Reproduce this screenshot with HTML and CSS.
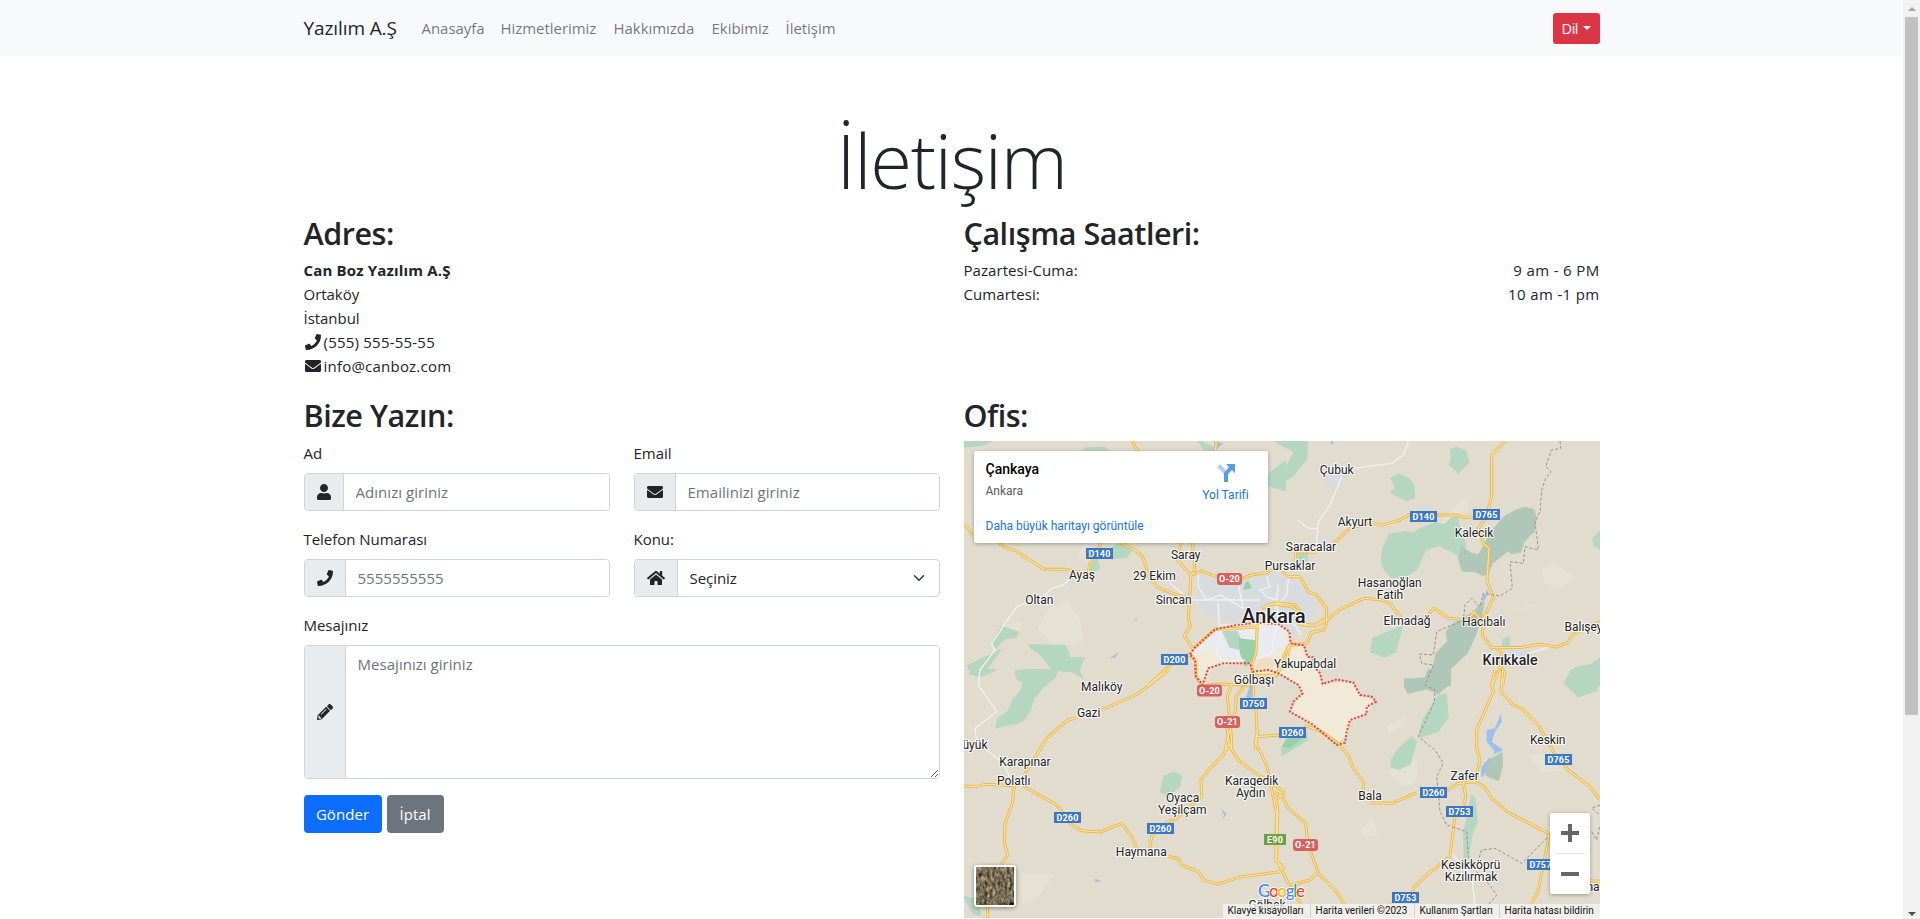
FILE: index.html
```html
<!DOCTYPE html>
<html lang="tr">
<head>
<meta charset="utf-8">
<title>İletişim</title>
<link rel="stylesheet" href="styles.css">
</head>
<body>
<svg class="sprite" aria-hidden="true">
  <symbol id="i-phone" viewBox="0 0 512 512"><path d="M493.4 24.6l-104-24c-11.3-2.6-22.9 3.3-27.5 13.9l-48 112c-4.2 9.8-1.4 21.3 6.9 28l60.6 49.6c-36 76.7-98.9 140.5-177.2 177.2l-49.6-60.6c-6.8-8.3-18.2-11.1-28-6.9l-112 48C3.9 366.5-2 378.1.6 389.4l24 104C27.1 504.2 36.7 512 48 512c256.1 0 464-207.5 464-464 0-11.2-7.7-20.9-18.6-23.4z"/></symbol>
  <symbol id="i-mail" viewBox="0 0 512 512"><path d="M502.3 190.8c3.9-3.1 9.7-.2 9.7 4.7V400c0 26.5-21.5 48-48 48H48c-26.5 0-48-21.5-48-48V195.6c0-5 5.7-7.8 9.7-4.7 22.4 17.4 52.1 39.5 154.1 113.6 21.1 15.4 56.7 47.8 92.2 47.6 35.7.3 72-32.8 92.3-47.6 102-74.1 131.6-96.3 154-113.7zM256 320c23.2.4 56.6-29.2 73.4-41.4 132.7-96.3 142.8-104.7 173.4-128.7 5.8-4.5 9.2-11.5 9.2-18.9v-19c0-26.5-21.5-48-48-48H48c-26.5 0-48 21.5-48 48v19c0 7.4 3.4 14.3 9.2 18.9 30.6 23.9 40.7 32.4 173.4 128.7 16.8 12.2 50.2 41.8 73.4 41.4z"/></symbol>
  <symbol id="i-user" viewBox="0 0 448 512"><path d="M224 256c70.7 0 128-57.3 128-128S294.7 0 224 0 96 57.3 96 128s57.3 128 128 128zm89.6 32h-16.7c-22.2 10.2-46.9 16-72.9 16s-50.6-5.8-72.9-16h-16.7C60.2 288 0 348.2 0 422.4V464c0 26.5 21.5 48 48 48h352c26.5 0 48-21.5 48-48v-41.6c0-74.2-60.2-134.4-134.4-134.4z"/></symbol>
  <symbol id="i-home" viewBox="0 0 576 512"><path d="M280.37 148.26L96 300.11V464a16 16 0 0 0 16 16l112.06-.29a16 16 0 0 0 15.92-16V368a16 16 0 0 1 16-16h64a16 16 0 0 1 16 16v95.64a16 16 0 0 0 16 16.05L464 480a16 16 0 0 0 16-16V300L295.67 148.26a12.19 12.19 0 0 0-15.3 0zM571.6 251.47L488 182.56V44.05a12 12 0 0 0-12-12h-56a12 12 0 0 0-12 12v72.61L318.47 43a48 48 0 0 0-61 0L4.34 251.47a12 12 0 0 0-1.6 16.9l25.5 31A12 12 0 0 0 45.15 301l235.22-193.74a12.19 12.19 0 0 1 15.3 0L530.9 301a12 12 0 0 0 16.9-1.6l25.5-31a12 12 0 0 0-1.7-16.93z"/></symbol>
  <symbol id="i-pencil" viewBox="0 0 512 512"><path d="M497.9 142.1l-46.1 46.1c-4.7 4.7-12.3 4.7-17 0l-111-111c-4.7-4.7-4.7-12.3 0-17l46.1-46.1c18.7-18.7 49.1-18.7 67.9 0l60.1 60.1c18.8 18.7 18.8 49.1 0 67.9zM284.2 99.8L21.6 362.4.4 483.9c-2.9 16.4 11.4 30.6 27.8 27.8l121.5-21.3 262.6-262.6c4.7-4.7 4.7-12.3 0-17l-111-111c-4.8-4.7-12.4-4.7-17.1 0zM124.1 339.9c-5.5-5.5-5.5-14.3 0-19.8l154-154c5.5-5.5 14.3-5.5 19.8 0s5.5 14.3 0 19.8l-154 154c-5.5 5.5-14.3 5.5-19.8 0zM88 424h48v36.3l-64.5 11.3-31.1-31.1L51.7 376H88v48z"/></symbol>
</svg>

<div class="page">
  <nav class="navbar">
    <div class="container bar">
      <span class="brand">Yazılım A.Ş</span>
      <div class="links"><a class="l1">Anasayfa</a><a class="l2">Hizmetlerimiz</a><a class="l3">Hakkımızda</a><a class="l4">Ekibimiz</a><a class="l5">İletişim</a></div>
      <button class="lang">Dil<i class="caret"></i></button>
    </div>
  </nav>

  <main class="container">
    <h1 class="title">İletişim</h1>
    <div class="grid">
      <section class="address">
        <h2>Adres:</h2>
        <p class="strong">Can Boz Yazılım A.Ş</p>
        <p>Ortaköy</p>
        <p>İstanbul</p>
        <p class="contact"><svg class="ico"><use href="#i-phone"/></svg><span>(555) 555-55-55</span></p>
        <p class="contact"><svg class="ico"><use href="#i-mail"/></svg><span>info@canboz.com</span></p>
      </section>
      <section class="hours">
        <h2>Çalışma Saatleri:</h2>
        <p class="row"><span>Pazartesi-Cuma:</span><span class="time">9 am - 6 PM</span></p>
        <p class="row"><span>Cumartesi:</span><span class="time">10 am -1 pm</span></p>
      </section>
      <section>
        <h2>Bize Yazın:</h2>
        <form class="form">
          <div class="field"><label>Ad</label><div class="group"><span class="pre"><svg class="ico user"><use href="#i-user"/></svg></span><input placeholder="Adınızı giriniz"></div></div>
          <div class="field"><label>Email</label><div class="group"><span class="pre"><svg class="ico"><use href="#i-mail"/></svg></span><input placeholder="Emailinizi giriniz"></div></div>
          <div class="field"><label>Telefon Numarası</label><div class="group"><span class="pre"><svg class="ico"><use href="#i-phone"/></svg></span><input placeholder="5555555555"></div></div>
          <div class="field"><label>Konu:</label><div class="group"><span class="pre"><svg class="ico home"><use href="#i-home"/></svg></span><div class="select"><span>Seçiniz</span><svg class="chev" viewBox="0 0 16 16"><path d="M2 5l6 6 6-6"/></svg></div></div></div>
          <div class="field wide"><label>Mesajınız</label><div class="group"><span class="pre"><svg class="ico"><use href="#i-pencil"/></svg></span><textarea placeholder="Mesajınızı giriniz"></textarea></div></div>
          <div class="actions wide"><button type="button" class="btn send">Gönder</button><button type="button" class="btn cancel">İptal</button></div>
        </form>
      </section>
      <section>
        <h2>Ofis:</h2>
        <div class="map">
          <svg class="canvas" viewBox="964 441 636 477">
            <defs>
              <g id="roads">
                <g transform="translate(955 435) scale(.33333)">
                  <path d="M530 0Q530 30 552 50M780 10Q790 40 770 60"/>
                  <path d="M27 270L40 280 52 303M130 322L150 338 183 348 266 402 330 403 375 412M440 322L425 350 405 385 398 420"/>
                  <path d="M495 322L540 345 563 365 582 425 608 457 660 478 702 488"/>
                  <path d="M680 320L664 372 708 420 700 550 706 575 688 602 712 640"/>
                  <path d="M712 322L720 405 708 420M708 420L740 408 790 427M858 432L890 420 935 413 975 392"/>
                  <path d="M706 655L645 692 580 750M920 520L950 507 990 507"/>
                </g>
                <g transform="translate(1275 435) scale(.33333)">
                  <path d="M692 18L650 60 650 185 632 250 610 280 625 325 642 340 636 435 655 490 645 510 628 545 622 600 650 638 740 637 795 628 845 636 880 622 890 600 975 560"/>
                  <path d="M290 262L320 271 350 262 375 255 400 240 440 240M485 240L545 240 565 248 600 245M290 262L225 280 175 325M125 352L60 350 65 395"/>
                  <path d="M20 410L40 425 75 425 100 470 125 480 155 520 155 565 145 585 110 592 95 625 45 630M0 507L50 515 70 530M85 568L120 573 155 555 200 520 268 490 320 495 345 505 380 550M440 560L477 520 520 550 580 555 597 530 622 560"/>
                  <path d="M665 640L680 655 678 690 652 750M675 695L690 712 683 750M45 630L30 690 0 720"/>
                </g>
                <g transform="translate(1170 560) scale(.33333)">
                  <path d="M60 285L75 300 78 350 98 377 150 372 240 375M75 262L135 208 200 205 265 200M262 190L258 280 245 315 248 345 320 347 340 290 358 255 385 255M184 375L172 410 184 530 184 570M222 378L198 410 196 450 175 530 165 570M250 375L250 410M258 448L262 530 330 525M262 530L255 570M60 285L45 293M285 140L320 128 375 135 400 165M385 190L400 195 440 195 465 175"/>
                </g>
                <g transform="translate(955 670) scale(.33333)">
                  <path d="M640 0L548 72 440 120M367 142L335 152 275 205 208 315M27 348L65 350 90 343 178 347 172 400 150 460 148 515 158 555 138 585M98 705L98 744M205 348L265 383 305 405 350 465 380 482 435 486 500 460 530 500 548 540M583 540L590 500 630 460 665 445 740 378 738 330 765 295 805 255 822 220M815 170L825 230 850 270 895 305 960 345 990 370M910 180L900 215 935 285 948 350 965 430 962 570 990 600M962 385L990 375M640 558L670 567 680 585 730 605 748 632 790 642 850 622 975 605"/>
                </g>
                <g transform="translate(1275 670) scale(.33333)">
                  <path d="M0 368L20 378 40 415 92 460 98 520 130 610 180 660 210 705 M0 385L8 410 5 570 40 640 100 744M50 645L105 630 122 612M75 185L95 168 140 185 190 220 222 260 235 295 265 335 265 370M285 398L350 400 425 368M515 362L550 340 600 335 628 350 650 385 700 428 820 490 820 510 790 660 765 710M660 0L650 45 655 65 605 180 605 230 615 275 605 310M683 0L678 65 715 105 740 115 790 165 815 210 835 245 880 300 945 350 975 390M565 340L572 380 565 408M540 440L525 560 455 615 415 655 412 670M350 700L330 715M945 632L975 634"/>
                </g>
              </g>
            </defs>
            <rect class="land" x="964" y="441" width="636" height="477"/>
            <g transform="translate(955 435) scale(.33333)">
              <path class="hill" d="M390 325L430 345 400 385 365 360zM150 570L200 560 190 600 150 610zM280 520L340 500 380 560 385 620 300 640 250 580zM900 670L980 690 960 720 890 700z"/>
              <path class="green" d="M27 18H110L80 30 27 35zM390 40L450 38 465 55 380 55zM730 18L780 40 760 55zM990 80L945 115 938 150 990 165zM465 345L490 328 528 345 515 365 475 370zM405 395L425 372 432 400 400 418zM140 575L190 592 185 605 150 610 120 638 110 625zM38 693L118 655 135 645 85 715 50 712zM222 630L330 632 345 670 385 670 370 710 295 705 255 655 230 640z"/>
              <path class="urban" d="M730 410L790 440 860 445 905 415 990 420 990 510 940 505 900 540 830 560 760 545 725 500zM610 470L700 470 700 505 620 500zM325 440L370 435 340 455z"/>
              <path class="water" d="M780 18L805 25 775 50zM545 545L538 555 545 558zM465 668L492 652 480 668z"/>
            </g>
            <g transform="translate(1275 435) scale(.33333)">
              <path class="hill" d="M490 265L575 180 580 220 500 290zM802 400L840 388 902 425 855 460 805 445zM710 530L800 500 760 520z"/>
              <path class="green" d="M0 18H95L95 70 50 125 0 150 0 120 35 95 60 50zM528 45L545 37 572 50 580 82 550 112 525 90 530 70zM348 130L370 118 400 132 415 150 418 188 395 195 348 172 365 162zM320 375L325 340 345 298 390 292 415 295 440 280 480 265 510 270 530 250 547 248 553 280 570 330 560 367 525 345 490 330 450 345 425 400 395 422 350 427 330 405zM295 610L380 575 360 650 330 665 288 650zM70 360L98 355 95 380 75 380zM975 290L955 310 958 330 975 340zM685 615L700 607 705 640 685 638zM870 738L900 700 950 690 975 670 975 750H875z"/>
              <path class="forest" d="M552 372L562 337 585 355 610 362 630 330 645 295 690 245 720 228 750 218 775 225 782 250 775 290 745 320 735 350 710 355 700 345 650 385 640 410 625 420 600 408 563 407zM543 560L595 535 625 500 620 540 600 600 575 655 525 700 525 750H455L475 700 485 655 520 620 515 590zM390 735L450 730 480 750H390z"/>
              <path class="urban" d="M150 125L180 80 225 105 190 150 150 165zM115 325L160 300 160 340zM0 420L60 435 120 500 120 560 70 560 50 620 0 620zM500 545L550 555 530 570zM670 645L760 645 760 700 700 690z"/>
              <path class="water" d="M167 18H174V30L167 25zM636 460L640 475 625 500 622 480 633 478z"/>
            </g>
            <g transform="translate(955 670) scale(.33333)">
              <path class="hill" d="M200 610L295 615 250 680 200 700z"/>
              <path class="green" d="M85 0H120L75 20 45 10zM182 5L215 0H305L300 20 265 50 235 85 225 120 210 145 185 160 150 165 125 173 130 145 160 125 175 90 200 60 205 35 185 25zM368 0L383 22 345 0zM628 320L655 308 678 318 673 350 640 376 618 365zM27 680L65 690 75 735 55 730zM980 240L990 230V250z"/>
              <path class="water" d="M875 85L888 45 895 40 888 85zM798 415L815 433 800 450 808 435zM420 627L443 634 420 636z"/>
            </g>
            <g transform="translate(1275 670) scale(.33333)">
              <path class="hill" d="M335 170L395 135 380 170 340 190zM340 310L400 250 430 280 420 340 380 350zM255 480L290 445 310 490 270 505zM760 255L820 250 860 300 800 310z"/>
              <path class="green" d="M22 235L45 195 95 192 95 210 22 255zM432 198L445 150 490 78 513 73 518 140 490 182 440 200zM350 270L370 240 410 202 423 215 405 280 370 297 350 290zM567 488L580 440 590 378 598 385 606 455 590 490 578 565H569zM870 40L890 0H965V60L910 80z"/>
              <path class="forest" d="M390 50L390 28 450 30 460 0H515L523 40 490 70 455 55 400 68zM630 280L680 250 680 290 670 330 635 315z"/>
              <path class="water" d="M635 180L660 175 678 130 680 155 660 185 650 215 685 240 650 255 625 320 618 320 620 290 660 245 635 215z"/>
            </g>
            <g transform="translate(1170 560) scale(.33333)">
              <path class="area" d="M60 283L135 208 262 188 330 195 358 220 362 250 402 255 412 290 450 340 458 372 545 365 570 405 618 422 590 462 540 480 530 525 500 552 430 500 360 455 395 400 385 375 325 345 248 345 240 310 205 310 125 325 98 375 78 350z"/>
              <path class="city" d="M70 275L135 210 262 200 330 200 350 250 310 280 270 300 150 300 130 265z"/>
              <path class="cream" d="M262 300L300 290 320 310 300 335 255 330z"/>
              <path class="green" d="M160 215L200 215 225 270 180 260z"/><path class="park" d="M205 235L255 240 258 295 225 320 210 280zM235 62L245 85 220 90 225 70zM335 560L350 535 400 533 360 565z"/>
              <path class="water" d="M228 412L240 375 250 378 246 412z"/>
              <path class="minor" d="M0 70L60 120 110 120 150 105 220 145M85 30L85 80 110 120M205 75L220 145M145 130L148 240 140 285 160 305 225 300M290 50L300 80 270 90 290 110 320 120 325 180 310 240 305 280 265 295M325 75L320 120M370 190L395 225M150 195H240M110 120H270"/>
            </g>
            <g class="minor" transform="translate(955 435) scale(.33333)"><path d="M340 435L325 450 290 460 260 490 215 505 185 515 110 625 120 645 75 705 70 750 125 830 60 880 65 920 150 990 170 1045"/></g>
            <g class="minor" transform="translate(1275 435) scale(.33333)"><path d="M400 20L385 60 350 85 270 95 205 105M200 125L165 210 130 260 122 350M130 280L100 280 68 255M760 655L840 630M528 1255L590 1320 602 1430M40 430L35 480 0 520"/></g>
            <use href="#roads" class="edge"/>
            <use href="#roads" class="core"/>
            <g class="border" transform="translate(1275 435) scale(.33333)"><path d="M855 18L857 40 830 45 812 95 828 110 812 130 800 165 795 230 780 260 790 345 750 335 745 385 705 380 712 460 675 483 625 475 615 515 590 490 570 510 565 555 485 590 475 660 433 657 440 685 475 690 450 750 480 765 478 800 430 905 480 945 505 985 485 1025 495 1130 515 1170 575 1190 580 1265 605 1290 620 1245 660 1240 740 1285 780 1245 820 1205M975 1110L950 1120 975 1140M950 1190L965 1215 975 1170M605 1310L640 1345 665 1380 640 1410"/></g>
            <path class="limit" transform="translate(1170 560) scale(.33333)" d="M60 283L75 262 135 208 200 195 262 188 325 192 358 215 362 250 402 256 412 290 430 292 432 320 450 340 458 372 500 358 550 368 570 405 605 410 618 425 590 440 590 462 540 480 530 515 525 548 500 555 430 495 360 455 370 425 398 400 385 375 325 340 295 330 248 335 240 310 200 310 160 310 115 325 98 375 78 350 75 300z"/>

            <g class="place">
              <text x="1039.3" y="604">Oltan</text><text x="1082" y="579">Ayaş</text><text x="1154.3" y="580">29 Ekim</text><text x="1185.7" y="559">Saray</text><text x="1173.7" y="604">Sincan</text>
              <text x="1336.7" y="474">Çubuk</text><text x="1355" y="526">Akyurt</text><text x="1311" y="551">Saracalar</text><text x="1290" y="570">Pursaklar</text><text x="1474" y="537">Kalecik</text><text x="1389.7" y="587">Hasanoğlan</text><text x="1390" y="599">Fatih</text><text x="1407" y="625">Elmadağ</text><text x="1483.7" y="626">Hacıbalı</text><text x="1583.5" y="631">Balışey</text><text x="1305" y="668">Yakupabdal</text><text x="1254" y="684">Gölbaşı</text>
              <text x="1101.7" y="691">Malıköy</text><text x="1088.7" y="717">Gazi</text><text x="975" y="749">üyük</text><text x="1025" y="766">Karapınar</text><text x="1013.7" y="785">Polatlı</text><text x="1182.7" y="802">Oyaca</text><text x="1182.3" y="814">Yeşilçam</text><text x="1251.7" y="785">Karagedik</text><text x="1250.7" y="797">Aydın</text><text x="1141.3" y="856">Haymana</text><text x="1267" y="909">Gölbek</text>
              <text x="1547.7" y="744">Keskin</text><text x="1464.7" y="780">Zafer</text><text x="1370" y="800">Bala</text><text x="1470.7" y="869">Kesikköprü</text><text x="1471" y="881">Kızılırmak</text><text x="1593" y="891">na</text>
              <text class="town" x="1510" y="665">Kırıkkale</text><text class="capital" x="1273.7" y="623">Ankara</text>
            </g>
            <g class="shield">
              <g transform="translate(1086 548)"><rect/><text x="13.5" y="9">D140</text></g>
              <g transform="translate(1161 654)"><rect/><text x="13.5" y="9">D200</text></g>
              <g transform="translate(1410 511)"><rect/><text x="13.5" y="9">D140</text></g>
              <g transform="translate(1473 509)"><rect/><text x="13.5" y="9">D765</text></g>
              <g transform="translate(1240 698)"><rect/><text x="13.5" y="9">D750</text></g>
              <g transform="translate(1279 727)"><rect/><text x="13.5" y="9">D260</text></g>
              <g transform="translate(1054 812)"><rect/><text x="13.5" y="9">D260</text></g>
              <g transform="translate(1147 823)"><rect/><text x="13.5" y="9">D260</text></g>
              <g transform="translate(1420 787)"><rect/><text x="13.5" y="9">D260</text></g>
              <g transform="translate(1446 806)"><rect/><text x="13.5" y="9">D753</text></g>
              <g transform="translate(1392 892)"><rect/><text x="13.5" y="9">D753</text></g>
              <g transform="translate(1545 754)"><rect/><text x="13.5" y="9">D765</text></g>
              <g transform="translate(1527 859)"><rect/><text x="13.5" y="9">D757</text></g>
              <g class="euro" transform="translate(1264 834)"><rect/><text x="11" y="9">E90</text></g>
              <g class="toll" transform="translate(1217 573)"><rect/><text x="12.5" y="9">O-20</text></g>
              <g class="toll" transform="translate(1197 684.5)"><rect/><text x="12.5" y="9">O-20</text></g>
              <g class="toll" transform="translate(1215 716)"><rect/><text x="12.5" y="9">O-21</text></g>
              <g class="toll" transform="translate(1293 839)"><rect/><text x="12.5" y="9">O-21</text></g>
            </g>
            <text class="logo" x="1258" y="897" textLength="47"><tspan fill="#4285f4">G</tspan><tspan fill="#ea4335">o</tspan><tspan fill="#fbbc04">o</tspan><tspan fill="#4285f4">g</tspan><tspan fill="#34a853">l</tspan><tspan fill="#ea4335">e</tspan></text>
          </svg>
          <div class="card">
            <div class="info"><b>Çankaya</b><span>Ankara</span><a>Daha büyük haritayı görüntüle</a></div>
            <div class="route"><svg viewBox="0 0 18 18"><path fill="#b3cff8" d="M0 3L3 0 9 6.5V12L7 10z"/><path fill="#5a9be8" d="M9 0h9v9l-3-3-4 4v8H7v-9l5-6z"/></svg><a>Yol Tarifi</a></div>
          </div>
          <div class="zoom"><span class="plus"></span><hr><span class="minus"></span></div>
          <svg class="thumb" viewBox="0 0 38 38"><filter id="soil"><feTurbulence type="fractalNoise" baseFrequency=".35 .2" numOctaves="4" seed="5"/><feColorMatrix values=".7 .4 0 0 -.08  .6 .42 0 0 -.09  .5 .4 0 0 -.12  0 0 0 0 1"/></filter><g filter="url(#soil)" class="soil"><rect width="38" height="38"/></g><path d="M33 38L34 35 38 36V38z" fill="#111"/></svg>
          <div class="credits"><span class="c1">Klavye kısayolları</span><span class="c2">Harita verileri ©2023</span><span class="c3">Kullanım Şartları</span><span class="c4">Harita hatası bildirin</span></div>
        </div>
      </section>
    </div>
  </main>
</div>
<aside class="scroll"><i class="up"></i><div class="thumbbar"></div><i class="down"></i></aside>
</body>
</html>
```
FILE: styles.css
```css
* { box-sizing: border-box; }
body { margin: 0; display: flex; height: 919px; overflow: hidden; background: #fff; color: #212529; font: 15px/24px "Open Sans", "Noto Sans", sans-serif; letter-spacing: -.04px; }
p, h1, h2 { margin: 0; }
.sprite { position: absolute; width: 0; height: 0; }
.page { flex: 1; }
.container { width: 1296px; margin: 0 auto; }
.navbar { height: 56px; background: #f8f9fa; }
.bar { display: flex; align-items: center; height: 56px; }
.brand { width: 94px; margin-right: 24px; font-size: 19px; letter-spacing: -.1px; white-space: nowrap; }
.links { display: flex; gap: 16px; flex: 1; color: rgba(0,0,0,.55); white-space: nowrap; }
.l1 { width: 63px; } .l2 { width: 97px; } .l3 { width: 82px; } .l4 { width: 58px; }
.lang { display: flex; align-items: center; justify-content: center; width: 47px; height: 31px; padding: 2px 0 0 1px; border: 0; border-radius: 3px; background: #dc3545; color: #fff; font: 14px "Liberation Sans", sans-serif; }
.caret { margin: -3px 0 0 5px; border: 4px solid transparent; border-top-color: #fff; border-bottom: 0; }

.title { padding-top: 56px; height: 157px; text-align: center; font-size: 76px; line-height: 96px; font-weight: 300; letter-spacing: -1.3px; }
.grid { display: grid; grid-template-columns: 636px 636px; gap: 0 24px; }
.address, .hours { height: 182px; }
h2 { padding-top: 1px; margin-bottom: 7px; font-size: 30.5px; line-height: 38.4px; font-weight: 600; letter-spacing: -.45px; }
.address p, .hours p { position: relative; top: -1px; }
.strong { font-weight: 700; letter-spacing: .17px; }
.contact { display: flex; align-items: center; gap: 3px; padding-left: 1px; letter-spacing: .22px; }
.ico { width: 16px; height: 16px; fill: #212529; flex: none; }
.user { width: 14px; } .home { width: 18px; }
.row { display: flex; justify-content: space-between; }
.row { letter-spacing: .07px; }
.time { letter-spacing: .35px; }

.form { display: grid; grid-template-columns: 306px 306px; gap: 16px 24px; }
.wide { grid-column: 1 / 3; }
label { display: block; margin-bottom: 8px; }
.group { display: flex; min-height: 38px; border: 1px solid #ced4da; border-radius: 4px; overflow: hidden; }
.pre { display: flex; align-items: center; padding: 0 12px; background: #e9ecef; border-right: 1px solid #ced4da; }
input, textarea { flex: 1; min-width: 0; border: 0; margin: 0; padding: 6px 12px; font: inherit; letter-spacing: .04px; background: #fff; }
textarea { height: 132px; }
::placeholder { color: #6c757d; opacity: 1; }
.select { flex: 1; display: flex; align-items: center; justify-content: space-between; padding: 0 12px; }
.chev { width: 16px; height: 12px; fill: none; stroke: #343a40; stroke-width: 2; stroke-linecap: round; stroke-linejoin: round; }
.actions { display: flex; gap: 5px; }
.btn { height: 38px; padding: 0; border: 0; border-radius: 4px; color: #fff; font: inherit; letter-spacing: .05px; }
.send { width: 78px; background: #0d6efd; }
.cancel { width: 57px; background: #6c757d; }

.map { position: relative; width: 636px; height: 477px; overflow: hidden; font-family: Roboto, sans-serif; letter-spacing: 0; }
.canvas { display: block; width: 636px; height: 477px; }
.land { fill: #e2dccf; }
.hill { fill: #e6e1d5; }
.green { fill: #b5d7c1; stroke: #b5d7c1; stroke-width: 6; stroke-linejoin: round; }
.park { fill: #98d0a9; }
.forest { fill: #aec7b8; stroke: #aec7b8; stroke-width: 6; stroke-linejoin: round; }
.urban { fill: #d9dcdf; }
.area { fill: #f1ead8; }
.city { fill: #e9ebf0; }
.cream { fill: #eedfc0; }
.water { fill: #9dbff0; }
.minor { fill: none; stroke: #f0f1f3; stroke-width: 4; }
.edge, .core { fill: none; stroke-linejoin: round; }
.edge { stroke: #edb746; stroke-width: 9; }
.core { stroke: #f8e4a8; stroke-width: 3.5; }
.border { fill: none; stroke: #929292; stroke-width: 3; stroke-dasharray: 9 6; }
.limit { fill: none; stroke: #ee4237; stroke-width: 6; stroke-dasharray: 6 5; }
.place text { font-size: 12px; text-anchor: middle; fill: #202124; stroke: #fff; stroke-opacity: .85; stroke-width: 2.2px; stroke-linejoin: round; paint-order: stroke; }
.place .town { font-size: 14.2px; font-weight: 500; }
.place .capital { font-size: 20.3px; font-weight: 500; }
.shield rect { width: 27px; height: 11px; fill: #3b77c6; }
.shield text { font-size: 9px; font-weight: 700; text-anchor: middle; fill: #fff; letter-spacing: .2px; }
.shield .toll rect { width: 25px; height: 12px; rx: 3px; fill: #d8605f; }
.shield .euro rect { width: 22px; fill: #6ba043; }
.logo { font: 500 17px Lato, sans-serif; stroke: #fff; stroke-width: 1.5px; paint-order: stroke; }
.card { position: absolute; left: 10px; top: 10px; display: flex; width: 294px; height: 92px; padding: 10px 19px 0 12px; background: #fff; border-radius: 2px; box-shadow: 0 1px 4px rgba(0,0,0,.3); font-size: 12px; color: #5b5b5b; line-height: 16px; }
.info { flex: 1; display: flex; flex-direction: column; }
.info b { font-size: 14px; font-weight: 500; color: #000; margin-bottom: 6px; }
.info span { margin-bottom: 19px; }
.card a { color: #1a73e8; }
.route { width: 46px; padding-top: 3px; display: flex; flex-direction: column; align-items: center; gap: 5px; white-space: nowrap; }
.route svg { width: 18px; height: 18px; }
.zoom { position: absolute; right: 10px; top: 372px; width: 40px; height: 81px; padding: 11px 5px; display: flex; flex-direction: column; align-items: center; background: #fff; border-radius: 2px; box-shadow: 0 1px 4px rgba(0,0,0,.3); }
.plus, .minus { width: 18px; height: 18px; background: linear-gradient(#666, #666) center / 18px 4px no-repeat; }
.plus { background: linear-gradient(#666, #666) center / 18px 4px no-repeat, linear-gradient(#666, #666) center / 4px 18px no-repeat; }
.zoom hr { width: 30px; height: 1px; border: 0; margin: 11px 0; background: #e2e2e2; }
.thumb { position: absolute; left: 10px; top: 424px; width: 42px; height: 42px; border: 2px solid #fff; border-radius: 3px; background: #7b7060; box-shadow: 0 1px 4px rgba(0,0,0,.4); }
.soil { color-interpolation-filters: sRGB; }
#soil { color-interpolation-filters: sRGB; }
.credits { position: absolute; right: 0; bottom: 0; display: flex; width: 377px; height: 14px; background: rgba(245,244,241,.8); color: #111; font-size: 10px; line-height: 14px; white-space: nowrap; }
.credits span { padding-left: 5px; border-right: 1px solid #d8d5ce; }
.c1 { width: 88px; } .c2 { width: 104px; } .c3 { width: 85px; } .c4 { flex: 1; }
.credits .c4 { border: 0; }

.scroll { display: flex; flex-direction: column; align-items: center; width: 17px; height: 919px; background: #f1f1f1; }
.up, .down { border: 4px solid transparent; }
.up { margin: 7px 0 6px; border-top: 0; border-bottom-color: #a3a3a3; }
.down { margin-top: auto; margin-bottom: 3px; border-top-color: #505050; border-bottom: 0; }
.thumbbar { width: 13px; height: 698px; background: #c1c1c1; }
```
